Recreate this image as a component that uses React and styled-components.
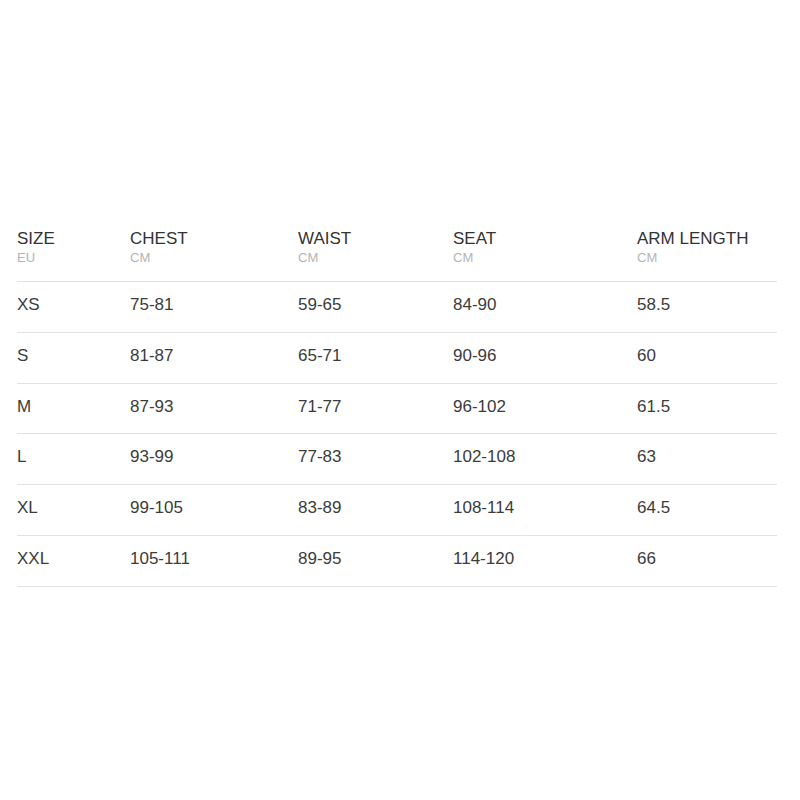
import styled, { createGlobalStyle } from "styled-components";

const GlobalStyle = createGlobalStyle`
  html, body {
    margin: 0;
    padding: 0;
    background: #ffffff;
  }
  body {
    font-family: "Liberation Sans", Arial, sans-serif;
    color: #383838;
  }
`;

const Page = styled.div`
  padding: 228px 23px 0 17px;
`;

const Table = styled.div`
  width: 760px;
`;

const Row = styled.div`
  display: grid;
  grid-template-columns: 113px 168px 155px 184px 1fr;
  border-bottom: 1px solid #e2e2e2;
  padding: ${(p) => (p.$head ? "1px 0 15px" : "13px 0 16.8px")};
`;

const Title = styled.div`
  font-size: 17px;
  line-height: 20px;
  color: #333;
`;

const Unit = styled.div`
  margin-top: 1px;
  font-size: 13px;
  line-height: 16px;
  color: #b4b4b4;
`;

const Cell = styled.div`
  font-size: 17px;
  line-height: 20px;
  color: #3c3c3c;
`;

const columns = [
  ["SIZE", "EU"],
  ["CHEST", "CM"],
  ["WAIST", "CM"],
  ["SEAT", "CM"],
  ["ARM LENGTH", "CM"],
];

const rows = [
  ["XS", "75-81", "59-65", "84-90", "58.5"],
  ["S", "81-87", "65-71", "90-96", "60"],
  ["M", "87-93", "71-77", "96-102", "61.5"],
  ["L", "93-99", "77-83", "102-108", "63"],
  ["XL", "99-105", "83-89", "108-114", "64.5"],
  ["XXL", "105-111", "89-95", "114-120", "66"],
];

export default function App() {
  return (
    <Page>
      <GlobalStyle />
      <Table>
        <Row $head>
          {columns.map(([title, unit]) => (
            <div key={title}>
              <Title>{title}</Title>
              <Unit>{unit}</Unit>
            </div>
          ))}
        </Row>
        {rows.map((r) => (
          <Row key={r[0]}>
            {r.map((v, i) => (
              <Cell key={i}>{v}</Cell>
            ))}
          </Row>
        ))}
      </Table>
    </Page>
  );
}
